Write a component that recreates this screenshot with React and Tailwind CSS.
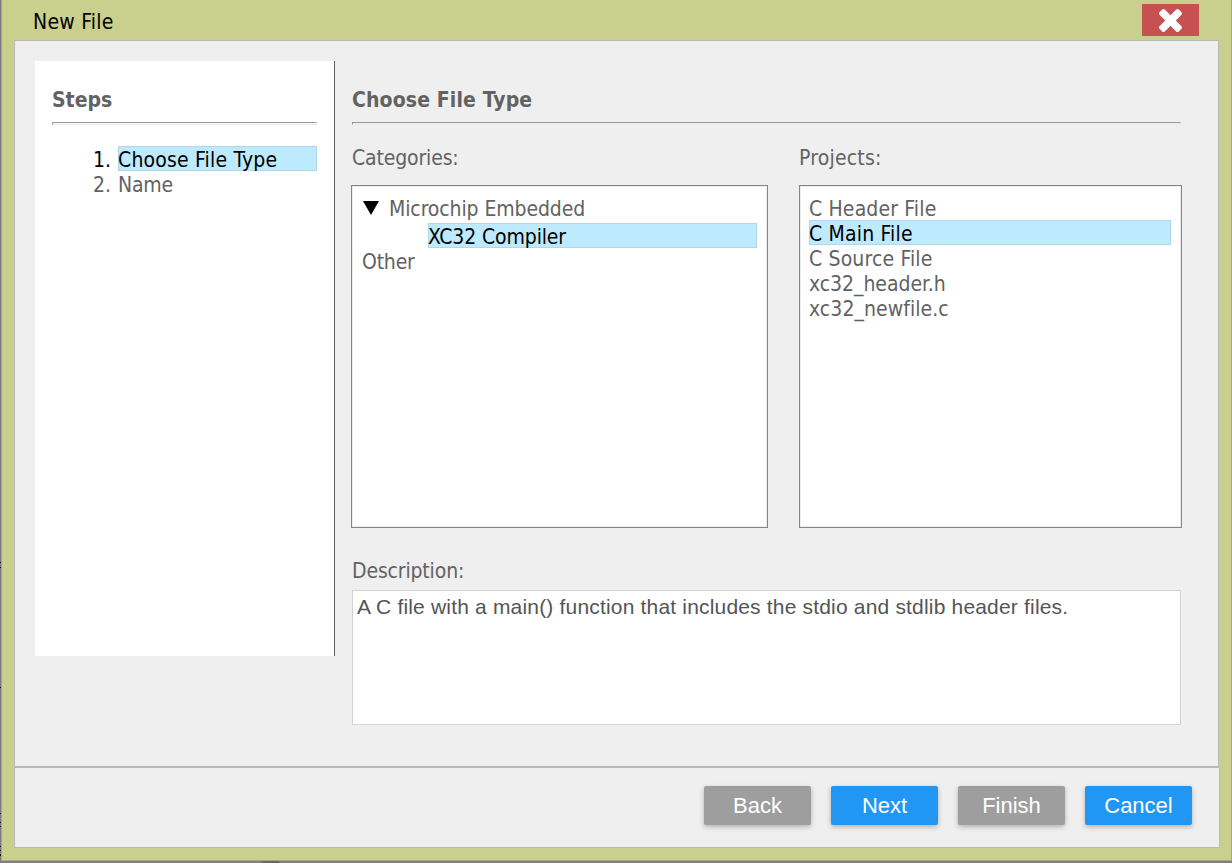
const TAHOMA =
  "font-['DejaVu_Sans_Condensed','DejaVu_Sans',sans-serif] [font-stretch:condensed]";

// Dark flecks of the page behind the window: [space above, height]
const flecks = [
  [0, 559, "bg-black"],
  [3, 1, "bg-black"],
  [4, 1, "bg-black"],
  [119, 1, "bg-black"],
  [125, 1, "bg-black"],
  [8, 1, "bg-black"],
  [3, 1, "bg-black"],
  [19, 1, "bg-black"],
  [3, 1, "bg-black"],
  [3, 2, "bg-black"],
];

function Backdrop() {
  return (
    <div className="w-px shrink-0 bg-[#7a7a7f]">
      {flecks.map(([gap, h, color], i) => (
        <div
          key={i}
          className={i === 0 ? "" : color}
          style={{ marginTop: gap, height: h }}
        />
      ))}
    </div>
  );
}

function Rule() {
  return (
    <div className="h-[3px] border-t border-r border-b border-l border-t-[#969696] border-l-[#969696] border-r-[#ececec] border-b-[#ececec]" />
  );
}

function Row({ selected, tracking = "", children }) {
  return (
    <div
      className={`h-[25px] whitespace-nowrap ${tracking} ${
        selected ? "bg-[#bdeaff] text-black shadow-[inset_0_0_0_1px_#aed7e8]" : ""
      }`}
    >
      <span className="block h-[25px] leading-[28px]">{children}</span>
    </div>
  );
}

function ListBox({ className, children }) {
  return (
    <div
      className={`h-[343px] border border-[#868686] bg-white pt-[9px] shadow-[inset_0_0_0_1px_#ececec] ${className}`}
    >
      {children}
    </div>
  );
}

function Button({ primary, children }) {
  return (
    <button
      className={`h-[39px] w-[107px] rounded-[2px] font-['Liberation_Sans',Arial,sans-serif] text-[22px] leading-[39px] text-white shadow-[0_2px_5px_0_rgba(0,0,0,0.26)] ${
        primary ? "bg-[#2196f3]" : "bg-[#9e9e9e]"
      }`}
    >
      {children}
    </button>
  );
}

function CloseIcon() {
  return (
    <svg viewBox="302 366 1188 1188" className="h-[23px] w-[23px]" fill="white">
      <path d="M1490 1322q0 40-28 68l-136 136q-28 28-68 28t-68-28l-294-294-294 294q-28 28-68 28t-68-28l-136-136q-28-28-28-68t28-68l294-294-294-294q-28-28-28-68t28-68l136-136q28-28 68-28t68 28l294 294 294-294q28-28 68-28t68 28l136 136q28 28 28 68t-28 68l-294 294 294 294q28 28 28 68z" />
    </svg>
  );
}

export default function App() {
  return (
    <div
      className={`flex h-[863px] w-[1232px] overflow-hidden bg-[#7f7f82] text-[21px] text-[#626262] ${TAHOMA}`}
    >
      <Backdrop />
      <div className="flex w-[1231px] flex-col">
        <div className="h-[861px] border-r border-b border-l border-[#a5ab72] bg-[#c9cf8d] pl-3">
          <header className="flex h-10 justify-between pr-8">
            <h1 className="ml-[19px] leading-[45px] tracking-[0.25px] text-black">New File</h1>
            <button className="mt-1 flex h-8 w-[57px] items-center justify-center bg-[#c75050]">
              <CloseIcon />
            </button>
          </header>

          <main className="flex h-[727px] w-[1205px] border border-[#b9b9bb] bg-[#efefef] pt-5 pl-5">
            <aside className="h-[595px] w-[300px] border-r border-[#5c5c5c] bg-white pr-[17px] pl-[17px]">
              <h2 className="h-[61px] pt-[26px] leading-[26px] font-bold">Steps</h2>
              <Rule />
              <ol className="mt-[21px]">
                <li className="flex h-[25px]">
                  <span className="w-[66px] pl-[41px] leading-[28px] text-black">1.</span>
                  <div className="flex-1">
                    <Row selected tracking="tracking-[0.19px]">
                      Choose File Type
                    </Row>
                  </div>
                </li>
                <li className="flex h-[25px]">
                  <span className="w-[66px] pl-[41px] leading-[28px]">2.</span>
                  <div className="flex-1">
                    <Row tracking="tracking-[-0.2px]">Name</Row>
                  </div>
                </li>
              </ol>
            </aside>

            <section className="ml-[16px] w-[831px]">
              <div className="mx-px">
                <h2 className="h-[61px] pt-[26px] leading-[26px] font-bold tracking-[0.13px]">
                  Choose File Type
                </h2>
                <Rule />
              </div>
              <div className="flex h-[343px] justify-between pt-[20px]">
                <div className="w-[417px]">
                  <div className="h-[40px] pl-px leading-[27px] tracking-[-0.15px]">
                    Categories:
                  </div>
                  <ListBox className="pr-[10px] pl-[10px]">
                    <div className="flex h-[28px]">
                      <svg width="16" height="14" viewBox="0 0 16 14" className="mt-[6px] ml-px">
                        <path d="M0 0h16L8 14z" fill="black" />
                      </svg>
                      <span className="ml-[10px] leading-[28px] tracking-[-0.1px]">
                        Microchip Embedded
                      </span>
                    </div>
                    <div className="ml-[66px]">
                      <Row selected tracking="tracking-[-0.13px]">
                        XC32 Compiler
                      </Row>
                    </div>
                    <Row tracking="tracking-[-0.2px]">Other</Row>
                  </ListBox>
                </div>
                <div className="w-[383px]">
                  <div className="h-[40px] leading-[27px] tracking-[0.2px]">Projects:</div>
                  <ListBox className="pr-[10px] pl-[9px]">
                    <Row tracking="tracking-[0.15px]">C Header File</Row>
                    <Row selected tracking="tracking-[0.18px]">
                      C Main File
                    </Row>
                    <Row tracking="tracking-[0.15px]">C Source File</Row>
                    <Row tracking="tracking-[-0.05px]">xc32_header.h</Row>
                    <Row tracking="tracking-[0.06px]">xc32_newfile.c</Row>
                  </ListBox>
                </div>
              </div>
              <div className="mx-px pt-[90px]">
                <div className="h-[32px] leading-[27px] tracking-[-0.15px]">Description:</div>
                <div className="h-[135px] border border-[#d2d2d2] bg-white pl-1 font-['Liberation_Sans',Arial,sans-serif] leading-[32px] tracking-[0.18px] text-[#555]">
                  A C file with a main() function that includes the stdio and stdlib header files.
                </div>
              </div>
            </section>
          </main>

          <footer className="flex h-[81px] w-[1206px] gap-5 border border-[#b9b9bb] bg-[#efefef] pt-[18px] pl-[689px]">
            <Button>Back</Button>
            <Button primary>Next</Button>
            <Button>Finish</Button>
            <Button primary>Cancel</Button>
          </footer>
        </div>
        <div className="h-[2px] pl-[261px]">
          <div className="h-[2px] w-[17px] bg-[#666]" />
        </div>
      </div>
    </div>
  );
}
